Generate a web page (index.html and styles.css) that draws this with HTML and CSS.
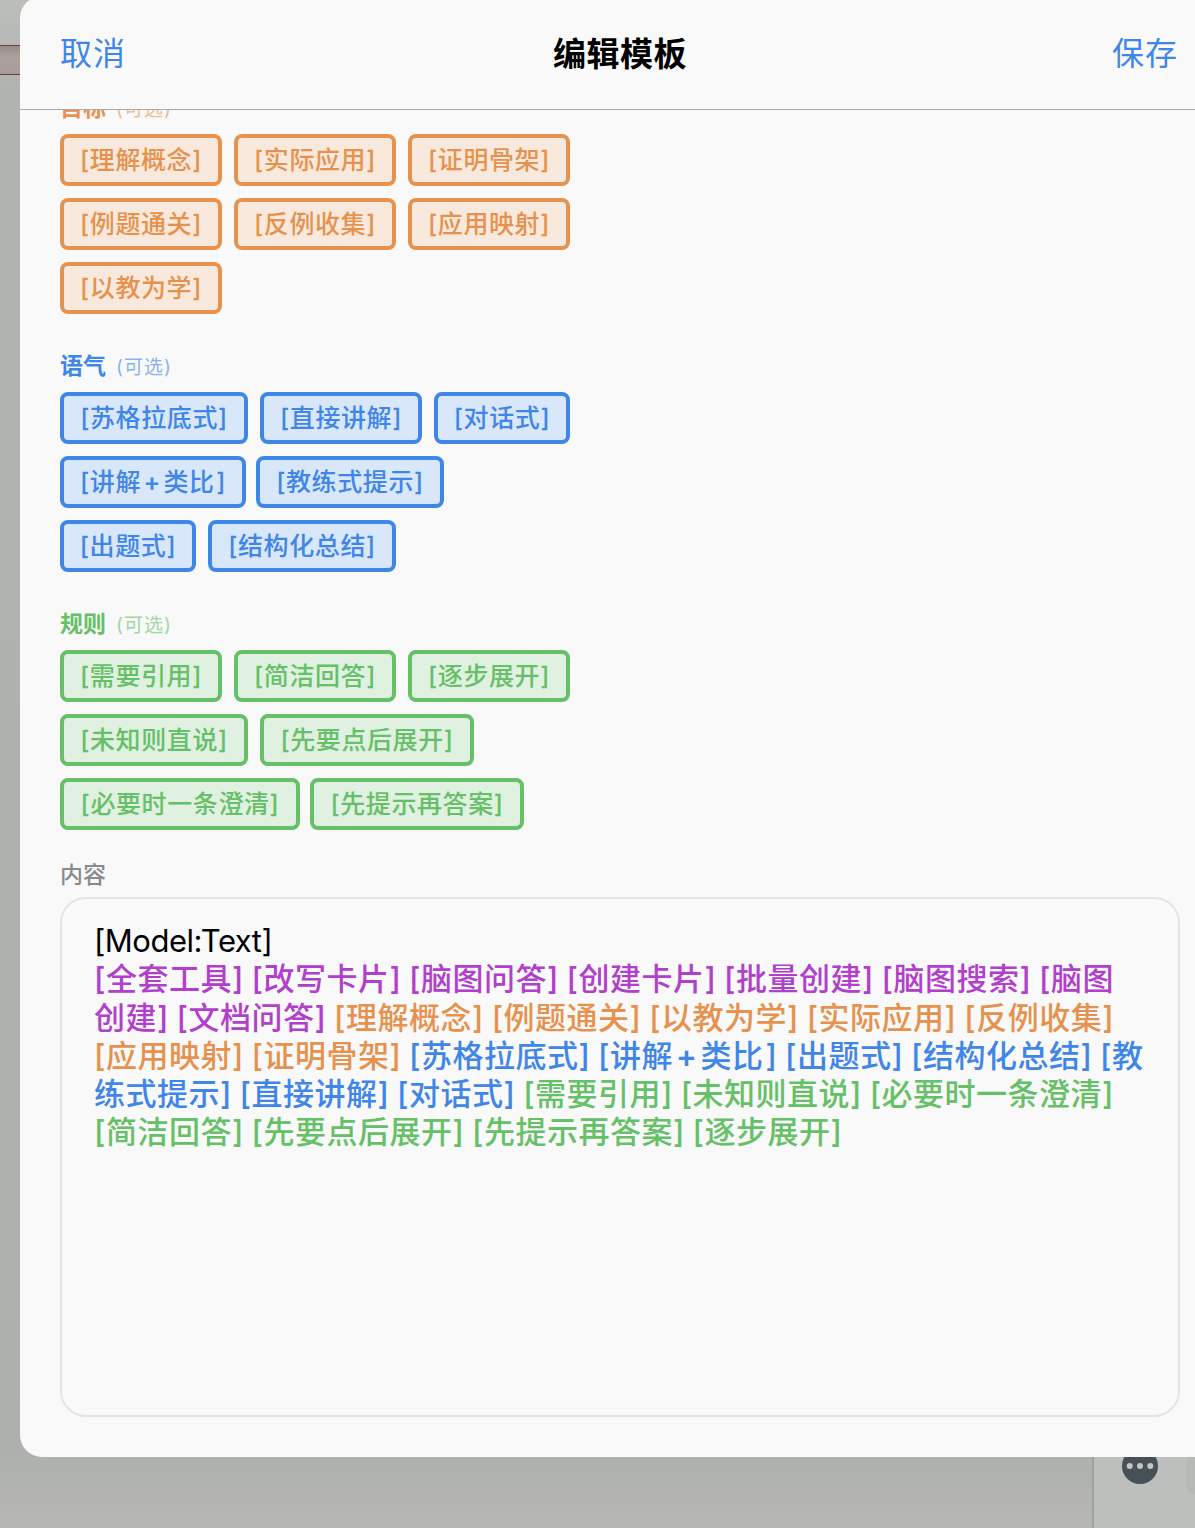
FILE: index.html
```html
<!DOCTYPE html>
<html lang="zh-CN">
<head>
    <meta charset="UTF-8">
    <meta name="viewport" content="width=device-width, initial-scale=1.0">
    <title>编辑模板</title>
    <link rel="stylesheet" href="styles.css">
</head>
<body>

    <div class="strip"></div>
    <div class="side-panel">
        <svg class="more" width="36" height="36" viewBox="0 0 36 36">
            <circle cx="18" cy="18" r="18" fill="#465056"/>
            <circle cx="7.7" cy="18" r="3" fill="#c3c6c3"/>
            <circle cx="18" cy="18" r="3" fill="#c3c6c3"/>
            <circle cx="28.3" cy="18" r="3" fill="#c3c6c3"/>
        </svg>
        <div class="side-box"></div>
    </div>

    <div class="sheet">
        <div class="navbar">
            <a class="nav-btn">取消</a>
            <h1>编辑模板</h1>
            <a class="nav-btn save">保存</a>
        </div>
        <div class="main">
            <div class="section orange">
                <div class="label">目标<small>(可选)</small></div>
                <div class="row">
                    <span class="chip w4">[理解概念]</span>
                    <span class="chip w4">[实际应用]</span>
                    <span class="chip w4">[证明骨架]</span>
                </div>
                <div class="row">
                    <span class="chip w4">[例题通关]</span>
                    <span class="chip w4">[反例收集]</span>
                    <span class="chip w4">[应用映射]</span>
                </div>
                <div class="row">
                    <span class="chip w4">[以教为学]</span>
                </div>
            </div>

            <div class="section blue">
                <div class="label">语气<small>(可选)</small></div>
                <div class="row">
                    <span class="chip w5">[苏格拉底式]</span>
                    <span class="chip w4">[直接讲解]</span>
                    <span class="chip w3">[对话式]</span>
                </div>
                <div class="row tight">
                    <span class="chip wplus">[讲解<b class="plus">+</b>类比<b class="end">]</b></span>
                    <span class="chip w5">[教练式提示]</span>
                </div>
                <div class="row">
                    <span class="chip w3">[出题式]</span>
                    <span class="chip w5">[结构化总结]</span>
                </div>
            </div>

            <div class="section green">
                <div class="label">规则<small>(可选)</small></div>
                <div class="row">
                    <span class="chip w4">[需要引用]</span>
                    <span class="chip w4">[简洁回答]</span>
                    <span class="chip w4">[逐步展开]</span>
                </div>
                <div class="row">
                    <span class="chip w5">[未知则直说]</span>
                    <span class="chip w6">[先要点后展开]</span>
                </div>
                <div class="row tight">
                    <span class="chip w7">[必要时一条澄清]</span>
                    <span class="chip w6">[先提示再答案]</span>
                </div>
            </div>

            <div class="content-label">内容</div>
            <div class="editor">
                <p class="model">[Model:Text]</p>
                <p class="purple">[全套工具] [改写卡片] [脑图问答] [创建卡片] [批量创建] [脑图搜索] [脑图</p>
                <p class="orange"><span class="purple">创建] [文档问答]</span> [理解概念] [例题通关] [以教为学] [实际应用] [反例收集]</p>
                <p class="blue"><span class="orange">[应用映射] [证明骨架]</span> [苏格拉底式] [讲解<b class="plus">+</b>类比<b class="end">]</b> [出题式] [结构化总结] [教</p>
                <p class="green"><span class="blue">练式提示] [直接讲解] [对话式]</span> [需要引用] [未知则直说] [必要时一条澄清]</p>
                <p class="green">[简洁回答] [先要点后展开] [先提示再答案] [逐步展开]</p>
            </div>
        </div>
    </div>

</body>
</html>
```

FILE: styles.css
```css
* {
    box-sizing: border-box;
}
body {
    margin: 0;
    height: 1528px;
    position: relative;
    overflow: hidden;
    background: linear-gradient(#bcbeba 0, #b0b3b0 90px, #adb0ac 1450px, #b7b7b5 1528px);
    font-family: Inter, "Noto Sans CJK SC", sans-serif;
}
.purple {
    color: #b13fcb;
}
.orange {
    color: #e6924e;
}
.blue {
    color: #4086e8;
}
.green {
    color: #65c067;
}

/* page behind the sheet */
.strip {
    position: absolute;
    top: 45px;
    left: 0;
    width: 40px;
    height: 30px;
    border-top: 1px solid #7b3a36;
    border-bottom: 1px solid #643f3d;
    background: linear-gradient(#958d8a, #aca09d 12px, #a99d9b);
}
.side-panel {
    position: absolute;
    left: 1092px;
    top: 1400px;
    width: 103px;
    height: 128px;
    border-left: 2px solid #a0a2a0;
    background: #bdbfbc;
}
.more {
    position: absolute;
    left: 28px;
    top: 48px;
}
.side-box {
    position: absolute;
    right: 0;
    top: 40px;
    width: 9px;
    height: 54px;
    border-radius: 0 0 0 8px;
    background: #b7b9b6;
}

.sheet {
    position: relative;
    margin-left: 20px;
    margin-top: -4px;
    width: 1200px;
    height: 1461px;
    padding-top: 4px;
    border-radius: 22px;
    background: #f9f9f9;
    overflow: hidden;
}
.navbar {
    display: flex;
    justify-content: space-between;
    align-items: center;
    height: 110px;
    padding: 0 40px;
    border-bottom: 1px solid #a9a9a9;
}
.navbar h1 {
    margin: 0 0 6px;
    font-size: 33px;
    font-weight: 700;
    letter-spacing: 0.5px;
    color: #000;
}
.nav-btn {
    width: 100px;
    margin-bottom: 2px;
    font-size: 32px;
    line-height: 48px;
    letter-spacing: 1px;
    color: #4086e8;
}
.save {
    padding-right: 2px;
    text-align: right;
}

.main {
    height: 1347px;
    padding: 0 40px;
    overflow: hidden;
}
.section {
    margin-bottom: 26px;
}
/* scrolled a little under the navbar */
.section:first-child {
    margin-top: -28px;
}
.label {
    height: 52px;
    line-height: 52px;
    font-size: 23px;
    font-weight: 700;
}
.label small {
    margin-left: 10px;
    font-size: 19px;
    font-weight: 400;
    letter-spacing: 1px;
    opacity: 0.6;
}
.row {
    display: flex;
    gap: 12px;
    margin-bottom: 12px;
}
.row:last-child {
    margin-bottom: 0;
}
.tight {
    gap: 10px;
}
.chip {
    height: 52px;
    line-height: 45px;
    border: 4px solid currentColor;
    border-radius: 8px;
    text-align: center;
    white-space: nowrap;
    font-size: 25px;
    font-weight: 500;
    letter-spacing: 0.6px;
}
.orange .chip {
    background: #f8e9dc;
}
.blue .chip {
    background: #d8e7f9;
}
.green .chip {
    background: #e0f0e1;
}
.w3 {
    width: 136px;
}
.w4 {
    width: 162px;
}
.w5 {
    width: 188px;
}
.w6 {
    width: 214px;
}
.w7 {
    width: 240px;
}
.wplus {
    width: 186px;
}
.plus {
    margin: 0 0.1em;
    font-weight: 600;
}
.end {
    margin-left: 0.06em;
    font-weight: 500;
}

.content-label {
    height: 41px;
    line-height: 38px;
    font-size: 23px;
    font-weight: 500;
    color: #8a8a8d;
}
.editor {
    height: 520px;
    padding: 23px 32px;
    border: 2px solid #e4e4e7;
    border-radius: 26px;
}
.editor p {
    margin: 0;
    height: 38.3px;
    line-height: 38.3px;
    white-space: nowrap;
    font-size: 31px;
    font-weight: 500;
    letter-spacing: 0.5px;
    word-spacing: -1.1px;
}
.editor .model {
    font-weight: 400;
    letter-spacing: -0.5px;
    color: #000;
}
```
